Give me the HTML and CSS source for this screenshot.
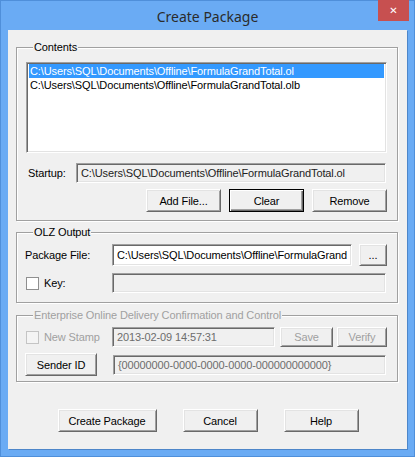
FILE: index.html
```html
<!DOCTYPE html>
<html lang="en">
<head>
  <meta charset="UTF-8">
  <title>Create Package</title>
  <link rel="stylesheet" href="styles.css">
</head>
<body>
  <div class="window">
    <div class="titlebar">
      <span class="title">Create Package</span>
      <span class="close">&#x2715;</span>
    </div>
    <div class="client">

      <!-- Contents -->
      <div class="group group-contents">
        <div class="group-title">Contents</div>
        <div class="listbox">
          <div class="item selected">C:\Users\SQL\Documents\Offline\FormulaGrandTotal.ol</div>
          <div class="item">C:\Users\SQL\Documents\Offline\FormulaGrandTotal.olb</div>
        </div>
        <div class="row row-startup">
          <span class="label label-startup">Startup:</span>
          <div class="field field-readonly field-startup">C:\Users\SQL\Documents\Offline\FormulaGrandTotal.ol</div>
        </div>
        <div class="row row-buttons">
          <button class="btn">Add File...</button>
          <button class="btn btn-default">Clear</button>
          <button class="btn">Remove</button>
        </div>
      </div>

      <!-- OLZ output -->
      <div class="group group-olz">
        <div class="group-title">OLZ Output</div>
        <div class="row row-package">
          <span class="label label-wide">Package File:</span>
          <div class="field field-package"><span class="clip">C:\Users\SQL\Documents\Offline\FormulaGrandTotal.olz</span></div>
          <button class="btn btn-browse">...</button>
        </div>
        <div class="row row-key">
          <label class="check label-wide"><span class="box"></span>Key:</label>
          <div class="field field-readonly field-key"></div>
        </div>
      </div>

      <!-- Enterprise -->
      <div class="group group-ent disabled">
        <div class="group-title">Enterprise Online Delivery Confirmation and Control</div>
        <div class="row row-stamp">
          <label class="check label-wide"><span class="box"></span>New Stamp</label>
          <div class="field field-readonly field-stamp">2013-02-09 14:57:31</div>
          <button class="btn btn-small btn-save" disabled>Save</button>
          <button class="btn btn-small btn-verify" disabled>Verify</button>
        </div>
        <div class="row row-sender">
          <button class="btn btn-sender">Sender ID</button>
          <div class="field field-readonly field-sender">{00000000-0000-0000-0000-000000000000}</div>
        </div>
      </div>

      <div class="row row-footer">
        <button class="btn btn-create">Create Package</button>
        <button class="btn">Cancel</button>
        <button class="btn">Help</button>
      </div>
    </div>
  </div>
</body>
</html>
```

FILE: styles.css
```css
body {
  margin: 0;
  padding: 0;
  font-family: "Liberation Sans", Arial, sans-serif;
  font-size: 11px;
  letter-spacing: -0.12px;
  color: #000;
}

.window {
  width: 415px;
  height: 457px;
  box-sizing: border-box;
  background: #6aabf4;
  border: 1px solid #4f8fda;
  padding: 0 7px 7px 7px;
  display: flex;
  flex-direction: column;
}

.titlebar {
  height: 29px;
  display: flex;
  justify-content: center;
  align-items: center;
  position: relative;
}

.title {
  font-family: "Noto Sans", "Open Sans", sans-serif;
  font-size: 14px;
  letter-spacing: 0;
  color: #2b2b2b;
  margin-top: 1px;
}

/* close button sits over the title bar corner */
.close {
  position: absolute;
  top: -1px;
  right: -2px;
  width: 31px;
  height: 21px;
  background: #c75050;
  color: #fff;
  font-family: "DejaVu Sans", sans-serif;
  font-size: 10px;
  font-weight: bold;
  display: flex;
  align-items: center;
  justify-content: center;
}

.client {
  flex: 1;
  background: #f0f0f0;
  box-shadow: 1px 1px 0 #4d86c9;
  padding: 17px 9px 0 8px;
  display: flex;
  flex-direction: column;
}

/* etched group box */
.group {
  border: 1px solid #a0a0a0;
  box-shadow: inset 1px 1px 0 #fff, 1px 1px 0 #fff;
  padding: 0 10px 0 9px;
}

.group-title {
  display: table;
  margin: -7px 0 0 7px;
  padding: 0 1px;
  background: #f0f0f0;
  line-height: 13px;
  white-space: nowrap;
}

.group-olz { margin-top: 11px; padding-bottom: 9px; }
.group-ent { margin-top: 12px; padding-bottom: 5px; }
.group-contents { padding-bottom: 8px; }

.disabled .group-title,
.disabled .check {
  color: #a0a0a0;
}

.listbox {
  margin-top: 8px;
  height: 91px;
  box-sizing: border-box;
  background: #fff;
  border: 1px solid;
  border-color: #a0a0a0 #fff #fff #a0a0a0;
  box-shadow: inset 1px 1px 0 #696969, inset -1px -1px 0 #e3e3e3;
  padding: 1px 2px;
}

.item {
  height: 14px;
  line-height: 14px;
  padding-left: 1px;
  white-space: nowrap;
}

.item.selected {
  background: #3399ff;
  color: #fff;
}

.row {
  display: flex;
  align-items: center;
}

.label-startup {
  width: 48px;
  padding-left: 2px;
}

.label-wide {
  width: 86px;
  flex: none;
}

.row-startup { margin-top: 10px; }
.row-buttons { margin-top: 6px; justify-content: flex-end; gap: 8px; }
.row-package { margin-top: 5px; margin-left: -1px; }
.row-key { margin-top: 7px; }
.row-stamp { margin-top: 5px; }
.row-sender { margin-top: 6px; }

.field {
  height: 20px;
  box-sizing: border-box;
  background: #fff;
  border: 1px solid;
  border-color: #a0a0a0 #fff #fff #a0a0a0;
  box-shadow: inset 1px 1px 0 #696969, inset -1px -1px 0 #e3e3e3;
  padding: 0 4px;
  line-height: 18px;
  white-space: nowrap;
  overflow: hidden;
}

.field-readonly { background: #f0f0f0; color: #222; }

.field-startup { flex: 1; margin-right: 1px; }
.field-package { width: 240px; height: 22px; line-height: 20px; margin-left: 1px; }
.field-package .clip { display: block; overflow: hidden; }
.field-key { flex: 1; margin-right: 1px; }
.field-stamp { width: 163px; color: #6d6d6d; }
.field-sender { flex: 1; margin-left: 16px; margin-right: 1px; color: #6d6d6d; }

.btn {
  width: 75px;
  height: 23px;
  box-sizing: border-box;
  background: #f0f0f0;
  font-family: inherit;
  font-size: 11px;
  letter-spacing: inherit;
  color: #000;
  padding: 0;
  border: 1px solid;
  border-color: #fff #696969 #696969 #fff;
  box-shadow: inset 1px 1px 0 #e3e3e3, inset -1px -1px 0 #a0a0a0;
}

.btn-default {
  border-color: #000;
  box-shadow: inset 1px 1px 0 #fff, inset -1px -1px 0 #696969, inset -2px -2px 0 #a0a0a0;
}

.btn:disabled { color: #a0a0a0; }

.btn-browse { width: 28px; height: 22px; margin-left: 7px; }
.btn-small { height: 20px; }
.btn-save { width: 53px; margin-left: 5px; }
.btn-verify { width: 50px; margin-left: 4px; }
.btn-sender { width: 72px; margin-left: -1px; }

.check {
  display: flex;
  align-items: center;
  padding-left: 0;
}

.box {
  width: 13px;
  height: 13px;
  box-sizing: border-box;
  background: #fff;
  border: 1px solid #8f8f8f;
  margin-right: 5px;
}

.disabled .box {
  background: #f4f4f4;
  border-color: #c4c4c4;
}

.row-footer {
  margin-top: 27px;
  justify-content: center;
  gap: 26px;
  margin-left: 2px;
}

.btn-create { width: 99px; }
```
